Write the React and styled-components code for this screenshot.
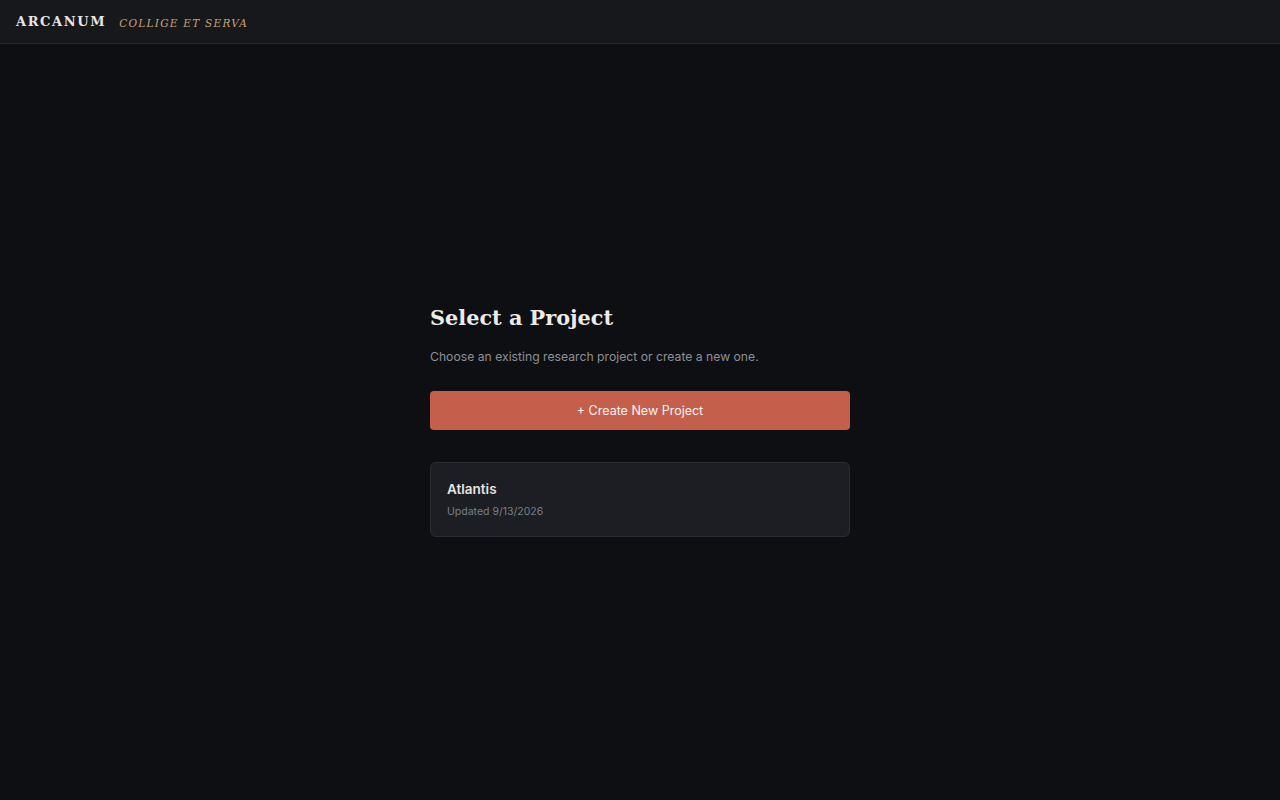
import React from 'react';
import styled, { createGlobalStyle } from 'styled-components';

const projects = [
  { id: 1, name: 'Atlantis', updated: '9/13/2026' },
];

function App() {
  return (
    <>
      <GlobalStyle />
      <Shell>
        <TopBar>
          <Brand>ARCANUM</Brand>
          <Motto>COLLIGE ET SERVA</Motto>
        </TopBar>
        <Main>
          <Picker>
            <Title>Select a Project</Title>
            <Lead>Choose an existing research project or create a new one.</Lead>
            <CreateButton>+ Create New Project</CreateButton>
            <ProjectList>
              {projects.map(p => (
                <ProjectCard key={p.id}>
                  <ProjectName>{p.name}</ProjectName>
                  <ProjectMeta>Updated {p.updated}</ProjectMeta>
                </ProjectCard>
              ))}
            </ProjectList>
          </Picker>
        </Main>
      </Shell>
    </>
  );
}

const serif = '"DejaVu Serif", "Liberation Serif", serif';
const sans = 'Inter, "Noto Sans", sans-serif';
const accent = '#c45f4c';

const GlobalStyle = createGlobalStyle`
  html, body, #root {
    margin: 0;
    height: 100%;
  }
  body {
    background: #0e0f12;
    color: #e6e4df;
    font-family: ${sans};
  }
`;

const Shell = styled.div`
  height: 100%;
  display: flex;
  flex-direction: column;
`;

const TopBar = styled.header`
  height: 43px;
  flex-shrink: 0;
  display: flex;
  align-items: center;
  gap: 13px;
  padding: 0 16px;
  background: #17181c;
  border-bottom: 1px solid #26282e;
`;

const Brand = styled.span`
  font-family: ${serif};
  font-weight: 700;
  font-size: 13px;
  letter-spacing: 1.6px;
  color: #e8e6e1;
`;

const Motto = styled.span`
  font-family: ${serif};
  font-style: italic;
  font-size: 10.5px;
  letter-spacing: 1.25px;
  color: #c9a274;
  margin-top: 2px;
`;

const Main = styled.main`
  flex: 1;
  display: flex;
  align-items: center;
  justify-content: center;
  padding-bottom: 3px;
`;

const Picker = styled.section`
  width: 420px;
  display: flex;
  flex-direction: column;
`;

const Title = styled.h1`
  margin: 0 0 16px;
  font-family: ${serif};
  font-size: 20.8px;
  line-height: 28px;
  font-weight: 700;
  color: #ecebe7;
`;

const Lead = styled.p`
  margin: 0 0 25px;
  font-size: 12.2px;
  line-height: 18px;
  color: #8d9099;
`;

const CreateButton = styled.button`
  height: 39px;
  border: none;
  border-radius: 4px;
  background: ${accent};
  color: #fbf4f1;
  font-family: ${sans};
  font-size: 12.5px;
  cursor: pointer;
`;

const ProjectList = styled.div`
  margin-top: 32px;
  display: flex;
  flex-direction: column;
  gap: 10px;
`;

const ProjectCard = styled.div`
  box-sizing: border-box;
  height: 75px;
  padding: 17px 16px 0;
  display: flex;
  flex-direction: column;
  gap: 7px;
  background: #1c1e24;
  border: 1px solid #2a2c33;
  border-radius: 6px;
`;

const ProjectName = styled.div`
  font-size: 13.5px;
  line-height: 18px;
  font-weight: 600;
  color: #e6e4df;
`;

const ProjectMeta = styled.div`
  font-size: 10.5px;
  line-height: 14px;
  color: #7b7f88;
`;

export default App;
